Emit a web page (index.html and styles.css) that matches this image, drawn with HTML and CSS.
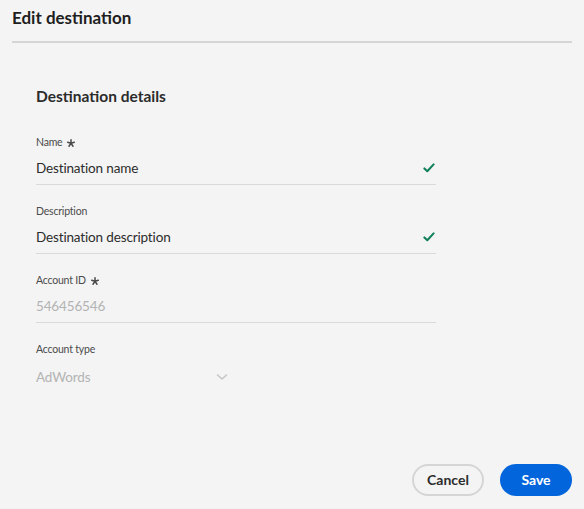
FILE: index.html
```html
<!DOCTYPE html>
<html>
<head>
<meta charset="utf-8">
<link rel="stylesheet" href="styles.css">
</head>
<body>
<div class="dialog">
  <header class="header">
    <h1 class="title">Edit destination</h1>
  </header>
  <main class="content">
    <h2 class="section-title">Destination details</h2>
    <div class="form">
      <div class="field">
        <div class="label">Name <svg class="req" width="8" height="8" viewBox="0 0 8 8"><g stroke="#4b4b4b" stroke-width="1.5" stroke-linecap="round"><path d="M4 4.3 L4 0.8"/><path d="M4 4.3 L7.3 3.2"/><path d="M4 4.3 L6 7.2"/><path d="M4 4.3 L2 7.2"/><path d="M4 4.3 L0.7 3.2"/></g></svg></div>
        <div class="input">
          <span class="value">Destination name</span>
          <svg class="check" width="12" height="10" viewBox="0 0 12 10"><path d="M1.4 5.4 L4.3 8.2 L10.6 1.4" fill="none" stroke="#12805c" stroke-width="2.1" stroke-linecap="round" stroke-linejoin="round"/></svg>
        </div>
      </div>
      <div class="field">
        <div class="label">Description</div>
        <div class="input">
          <span class="value">Destination description</span>
          <svg class="check" width="12" height="10" viewBox="0 0 12 10"><path d="M1.4 5.4 L4.3 8.2 L10.6 1.4" fill="none" stroke="#12805c" stroke-width="2.1" stroke-linecap="round" stroke-linejoin="round"/></svg>
        </div>
      </div>
      <div class="field">
        <div class="label">Account ID <svg class="req" width="8" height="8" viewBox="0 0 8 8"><g stroke="#4b4b4b" stroke-width="1.5" stroke-linecap="round"><path d="M4 4.3 L4 0.8"/><path d="M4 4.3 L7.3 3.2"/><path d="M4 4.3 L6 7.2"/><path d="M4 4.3 L2 7.2"/><path d="M4 4.3 L0.7 3.2"/></g></svg></div>
        <div class="input">
          <span class="value disabled">546456546</span>
        </div>
      </div>
      <div class="field">
        <div class="label">Account type</div>
        <div class="picker">
          <span class="value disabled">AdWords</span>
          <svg class="chevron" width="12" height="8" viewBox="0 0 12 8"><path d="M1.5 2 L6 6 L10.5 2" fill="none" stroke="#c6c6c6" stroke-width="1.6" stroke-linecap="round" stroke-linejoin="round"/></svg>
        </div>
      </div>
    </div>
  </main>
  <footer class="footer">
    <button class="btn btn-secondary">Cancel</button>
    <button class="btn btn-primary">Save</button>
  </footer>
</div>
</body>
</html>
```
FILE: styles.css
```css
html, body {
  margin: 0;
  padding: 0;
  background: #f4f4f4;
}
body {
  font-family: "Lato", "Open Sans", sans-serif;
  color: #2c2c2c;
}
.dialog {
  height: 509px;
  display: flex;
  flex-direction: column;
  box-sizing: border-box;
}
.header {
  margin: 0 12px;
  border-bottom: 2px solid #d5d5d5;
  height: 43px;
  box-sizing: border-box;
}
.title {
  margin: 0;
  padding-top: 7px;
  font-size: 17px;
  line-height: 22px;
  font-weight: 700;
  color: #1e1e1e;
}
.content {
  flex: 1;
  padding: 43px 36px 0;
}
.section-title {
  margin: 0;
  font-size: 15.5px;
  line-height: 20px;
  font-weight: 700;
  color: #2c2c2c;
}
.form {
  width: 400px;
  margin-top: 28px;
}
.field {
  margin-bottom: 18px;
}
.label {
  font-size: 10.5px;
  letter-spacing: -0.2px;
  line-height: 16px;
  color: #4b4b4b;
  display: flex;
  align-items: center;
  gap: 5px;
}
.req {
  position: relative;
  top: 1px;
}
.input, .picker {
  height: 33px;
  margin-top: 2px;
  display: flex;
  align-items: center;
  justify-content: space-between;
  box-sizing: border-box;
}
.input {
  border-bottom: 1px solid #dadada;
}
.picker {
  width: 192px;
  padding-top: 2px;
}
.value {
  font-size: 13.5px;
  letter-spacing: -0.15px;
  color: #2c2c2c;
}
.value.disabled {
  color: #b3b3b3;
}
.check {
  margin-right: 1px;
}
.footer {
  display: flex;
  justify-content: flex-end;
  gap: 16px;
  padding: 0 12px 13px;
}
.btn {
  height: 32px;
  width: 72px;
  border-radius: 16px;
  font-family: inherit;
  font-size: 14px;
  font-weight: 700;
  box-sizing: border-box;
  padding: 0 0 2px;
}
.btn-secondary {
  background: transparent;
  border: 2px solid #d5d5d5;
  color: #2c2c2c;
}
.btn-primary {
  background: #0265dc;
  border: none;
  color: #ffffff;
}
```
